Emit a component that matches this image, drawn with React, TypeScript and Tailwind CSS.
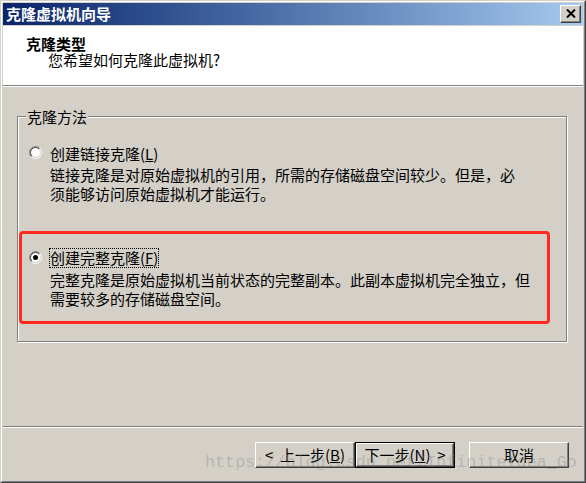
import React from "react";

const FONT = "[font-family:'Noto_Sans_CJK_SC','Noto_Sans_CJK_JP',sans-serif]";

function Radio({ checked }: { checked?: boolean }) {
  return (
    <svg width="13" height="13" viewBox="0 0 13 13" className="block">
      <defs>
        <linearGradient id={checked ? "go1" : "go0"} x1="0" y1="0" x2="1" y2="1">
          <stop offset="0.45" stopColor="#808080" />
          <stop offset="0.55" stopColor="#ffffff" />
        </linearGradient>
        <linearGradient id={checked ? "gi1" : "gi0"} x1="0" y1="0" x2="1" y2="1">
          <stop offset="0.45" stopColor="#404040" />
          <stop offset="0.55" stopColor="#d4d0c8" />
        </linearGradient>
      </defs>
      <circle cx="6.5" cy="6.5" r="6" fill="none" stroke={`url(#${checked ? "go1" : "go0"})`} strokeWidth="1" />
      <circle cx="6.5" cy="6.5" r="5" fill="#ffffff" stroke={`url(#${checked ? "gi1" : "gi0"})`} strokeWidth="1" />
      {checked && <circle cx="6.5" cy="6.5" r="2.5" fill="#000000" />}
    </svg>
  );
}

function Btn({ children, def }: { children: React.ReactNode; def?: boolean }) {
  if (def) {
    return (
      <div className="w-[100px] h-[26px] border border-black">
        <div className="w-full h-full border border-t-white border-l-white border-r-[#404040] border-b-[#404040] shadow-[inset_-1px_-1px_0_#808080] flex items-center justify-center text-[15px] leading-[16px] text-black whitespace-pre">
          {children}
        </div>
      </div>
    );
  }
  return (
    <div className="w-[100px] h-[26px] border border-t-white border-l-white border-r-[#404040] border-b-[#404040] shadow-[inset_-1px_-1px_0_#808080] flex items-center justify-center text-[15px] leading-[16px] text-black whitespace-pre">
      {children}
    </div>
  );
}

export default function App() {
  return (
    <div className={`${FONT} relative w-[586px] h-[483px] bg-[#d4d0c8] border border-t-[#d4d0c8] border-l-[#d4d0c8] border-r-[#404040] border-b-[#404040] text-black`}>
      <div className="w-full h-full border border-t-white border-l-white border-r-[#808080] border-b-[#808080] p-px flex flex-col">
        {/* Title bar */}
        <div className="h-[22px] flex items-center justify-between pl-[3px] pr-[2px] bg-gradient-to-r from-[#0a246a] to-[#a6caf0]">
          <span className="text-white font-bold text-[15px] leading-[16px]">克隆虚拟机向导</span>
          <div className="w-[21px] h-[18px] bg-[#d4d0c8] border border-t-white border-l-white border-r-[#404040] border-b-[#404040] shadow-[inset_-1px_-1px_0_#808080] flex items-center justify-center">
            <svg width="10" height="9" viewBox="0 0 10 9">
              <path d="M1 0.5 L9 8.5 M9 0.5 L1 8.5" stroke="#000" strokeWidth="2" fill="none" />
            </svg>
          </div>
        </div>
        <div className="h-px" />
        {/* Header */}
        <div className="h-[59px] bg-white pt-[10px] text-[15px] leading-[16px]">
          <div className="pl-[23px] font-bold">克隆类型</div>
          <div className="pl-[45px]">您希望如何克隆此虚拟机?</div>
        </div>
        <div className="h-px bg-[#808080]" />
        <div className="h-px bg-white" />
        {/* Body */}
        <div className="h-[340px] pt-[29px] pl-[14px]">
          <div className="relative w-[550px] h-[226px] border border-[#808080] shadow-[1px_1px_0_#ffffff,inset_1px_1px_0_#ffffff] pt-[26px] pl-[11px] text-[15px]">
            <span className="absolute left-[8px] top-[-8px] bg-[#d4d0c8] px-px leading-[16px]">克隆方法</span>

            <div className="flex items-start">
              <div className="h-[20px] flex items-center">
                <Radio />
              </div>
              <div className="ml-[7px]">
                <div className="h-[20px] inline-flex items-center border border-transparent leading-[16px]">
                  创建链接克隆(<span className="underline">L</span>)
                </div>
                <div className="pl-px leading-[19px]">
                  链接克隆是对原始虚拟机的引用，所需的存储磁盘空间较少。但是，必
                  <br />
                  须能够访问原始虚拟机才能运行。
                </div>
              </div>
            </div>

            <div className="flex items-start mt-[44px]">
              <div className="h-[20px] flex items-center">
                <Radio checked />
              </div>
              <div className="ml-[7px]">
                <div className="h-[20px] inline-flex items-center border border-dotted border-black leading-[16px]">
                  创建完整克隆(<span className="underline">F</span>)
                </div>
                <div className="pl-px leading-[19px]">
                  完整克隆是原始虚拟机当前状态的完整副本。此副本虚拟机完全独立，但
                  <br />
                  需要较多的存储磁盘空间。
                </div>
              </div>
            </div>

            <div className="absolute left-[1px] top-[114px] w-[531px] h-[93px] border-[3px] border-[#ff2a1c] rounded-[4px] pointer-events-none" />
          </div>
        </div>
        <div className="h-px bg-[#808080]" />
        <div className="h-px bg-white" />
        {/* Footer */}
        <div className="h-[52px] pt-[14px] pr-[14px] flex justify-end items-start">
          <Btn>{"<  上一步("}<span className="underline">B</span>)</Btn>
          <Btn def>下一步(<span className="underline">N</span>{")  >"}</Btn>
          <div className="ml-[14px]">
            <Btn>取消</Btn>
          </div>
        </div>
      </div>
      <div className="absolute left-[204px] top-[453px] pointer-events-none [font-family:'Liberation_Mono',monospace] text-[16.75px] leading-[17px] text-[rgba(120,120,120,0.33)] whitespace-nowrap">
        https://blog.csdn.net/InfiniteIdea_Go
      </div>
    </div>
  );
}
